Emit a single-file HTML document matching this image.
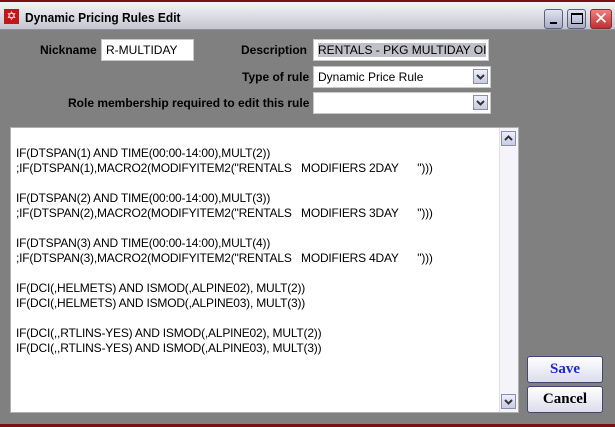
<!DOCTYPE html>
<html><head><style>
*{margin:0;padding:0;box-sizing:border-box}
body{width:615px;height:427px;overflow:hidden;background:#808080;font-family:"Liberation Sans",Arial,sans-serif;position:relative}
.tb{position:absolute;left:0;top:0;width:615px;height:30px;background:linear-gradient(#f4f4f8,#d8d8e0 60%,#c4c4cc);border-top:2px solid #7a1010;border-bottom:1px solid #9090a0}
.tt{position:absolute;left:25px;top:8px;font-size:13px;font-weight:bold;color:#000;transform:scaleX(.92);transform-origin:left}
.ic{position:absolute;left:4px;top:7px;width:15px;height:15px;background:#c01818;color:#fff;font-size:12px;line-height:15px;text-align:center}
.wb{position:absolute;top:7px;width:19px;height:20px;border:1px solid #5a6080;border-radius:3px;background:linear-gradient(#e0e4f0,#a8acc4)}
.lbl{position:absolute;font-size:12px;font-weight:bold;color:#000}
.fld{position:absolute;background:#fff;border:1px solid #c8c8c8;font-size:12px;padding-left:4px;line-height:20px;height:22px;white-space:nowrap;overflow:hidden}
.dd{position:absolute;width:15px;height:15px;border:1px solid #8890a8;background:linear-gradient(#eef,#c8cce0)}
.ta{position:absolute;left:10px;top:127px;width:509px;height:286px;background:#fff;border:1px solid #b0b0b0}
.txt{position:absolute;left:5px;top:18px;font-size:12px;line-height:15px;white-space:pre;color:#000;letter-spacing:-0.2px}
.sb{position:absolute;right:0;top:0;width:19px;height:284px;background:#f4f4fa;border-left:1px solid #e0e0e8}
.btn{position:absolute;left:527px;width:76px;height:27px;border:1px solid #404870;border-radius:3px;background:linear-gradient(#fff,#dcdcec);font-family:"Liberation Serif",serif;font-weight:bold;font-size:15px;text-align:center;line-height:25px}
</style></head><body>
<div class="tb"><div class="ic">✡</div><div class="tt">Dynamic Pricing Rules Edit</div>
<div class="wb" style="left:544px"><div style="position:absolute;left:5px;top:12px;width:7px;height:2px;background:#000"></div></div>
<div class="wb" style="left:567px"><div style="position:absolute;left:3px;top:3px;width:12px;height:11px;border:1px solid #000;border-top:2px solid #000"></div></div>
<div class="wb" style="left:590px;width:22px;background:linear-gradient(#f08080,#c03030);border-color:#803030;color:#fff;font-size:17px;text-align:center;line-height:18px">✕</div>
</div>
<div class="lbl" style="left:40px;top:43px">Nickname</div>
<div class="fld" style="left:101px;top:39px;width:93px">R-MULTIDAY</div>
<div class="lbl" style="left:241px;top:43px">Description</div>
<div class="fld" style="left:313px;top:39px;width:176px"><span style="background:#c0c0c8">RENTALS - PKG MULTIDAY OI</span></div>
<div class="lbl" style="left:242px;top:70px">Type of rule</div>
<div class="fld" style="left:313px;top:66px;width:178px">Dynamic Price Rule</div>
<div class="dd" style="left:473px;top:69px"><svg width="13" height="13"><path d="M3 5 L6.5 8.5 L10 5" fill="none" stroke="#333" stroke-width="2"/></svg></div>
<div class="lbl" style="left:68px;top:96px">Role membership required to edit this rule</div>
<div class="fld" style="left:313px;top:92px;width:178px"></div>
<div class="dd" style="left:473px;top:95px"><svg width="13" height="13"><path d="M3 5 L6.5 8.5 L10 5" fill="none" stroke="#333" stroke-width="2"/></svg></div>
<div class="ta"><div class="txt">IF(DTSPAN(1) AND TIME(00:00-14:00),MULT(2))
;IF(DTSPAN(1),MACRO2(MODIFYITEM2("RENTALS   MODIFIERS 2DAY      ")))

IF(DTSPAN(2) AND TIME(00:00-14:00),MULT(3))
;IF(DTSPAN(2),MACRO2(MODIFYITEM2("RENTALS   MODIFIERS 3DAY      ")))

IF(DTSPAN(3) AND TIME(00:00-14:00),MULT(4))
;IF(DTSPAN(3),MACRO2(MODIFYITEM2("RENTALS   MODIFIERS 4DAY      ")))

IF(DCI(,HELMETS) AND ISMOD(,ALPINE02), MULT(2))
IF(DCI(,HELMETS) AND ISMOD(,ALPINE03), MULT(3))

IF(DCI(,,RTLINS-YES) AND ISMOD(,ALPINE02), MULT(2))
IF(DCI(,,RTLINS-YES) AND ISMOD(,ALPINE03), MULT(3))</div>
<div class="sb"><div class="dd" style="left:1px;top:3px"><svg width="13" height="13"><path d="M3 8 L6.5 4.5 L10 8" fill="none" stroke="#333" stroke-width="2"/></svg></div><div class="dd" style="left:1px;top:266px"><svg width="13" height="13"><path d="M3 5 L6.5 8.5 L10 5" fill="none" stroke="#333" stroke-width="2"/></svg></div></div></div>
<div class="btn" style="top:356px;color:#1a28d8">Save</div>
<div class="btn" style="top:386px;color:#000">Cancel</div>
<div style="position:absolute;left:0;top:424px;width:615px;height:3px;background:#7a1010"></div>
</body></html>
